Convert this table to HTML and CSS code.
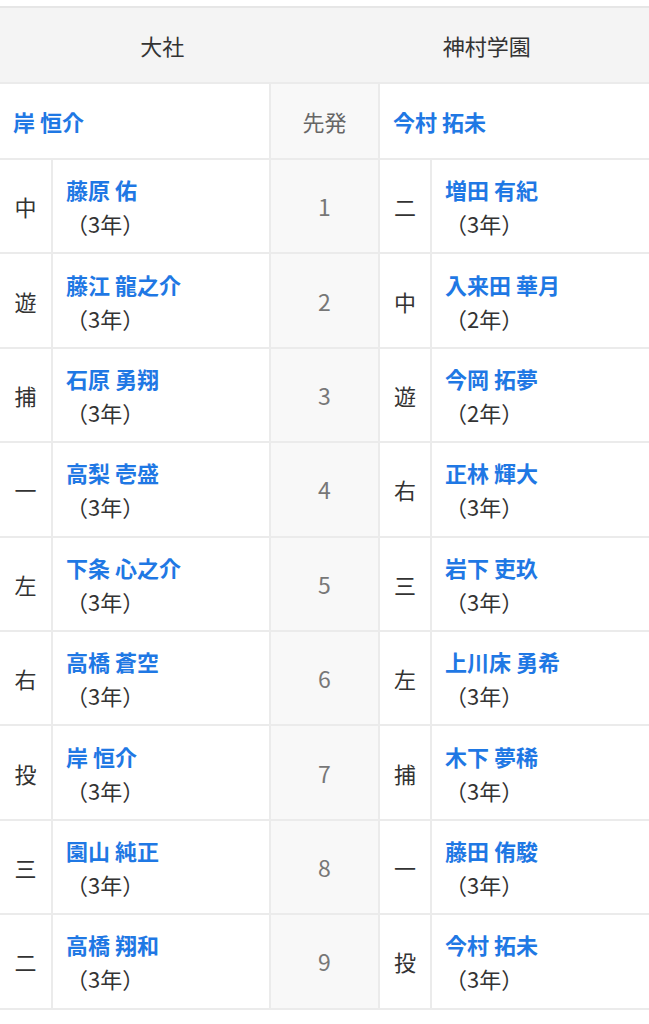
FILE: index.html
```html
<!DOCTYPE html>
<html lang="ja">
<head>
<meta charset="utf-8">
<title>スタメン</title>
<link rel="stylesheet" href="styles.css">
</head>
<body>
<div class="lineup">
  <div class="head">
    <div class="team">大社</div>
    <div class="team">神村学園</div>
  </div>
  <div class="pitcher left"><a class="name">岸 恒介</a></div>
  <div class="mid label">先発</div>
  <div class="pitcher right"><a class="name">今村 拓未</a></div>

  <div class="pos">中</div><div class="player"><a class="name">藤原 佑</a><span class="grade">（3年）</span></div><div class="mid num">1</div><div class="pos">二</div><div class="player"><a class="name">増田 有紀</a><span class="grade">（3年）</span></div>

  <div class="pos">遊</div><div class="player"><a class="name">藤江 龍之介</a><span class="grade">（3年）</span></div><div class="mid num">2</div><div class="pos">中</div><div class="player"><a class="name">入来田 華月</a><span class="grade">（2年）</span></div>

  <div class="pos">捕</div><div class="player"><a class="name">石原 勇翔</a><span class="grade">（3年）</span></div><div class="mid num">3</div><div class="pos">遊</div><div class="player"><a class="name">今岡 拓夢</a><span class="grade">（2年）</span></div>

  <div class="pos">一</div><div class="player"><a class="name">高梨 壱盛</a><span class="grade">（3年）</span></div><div class="mid num">4</div><div class="pos">右</div><div class="player"><a class="name">正林 輝大</a><span class="grade">（3年）</span></div>

  <div class="pos">左</div><div class="player"><a class="name">下条 心之介</a><span class="grade">（3年）</span></div><div class="mid num">5</div><div class="pos">三</div><div class="player"><a class="name">岩下 吏玖</a><span class="grade">（3年）</span></div>

  <div class="pos">右</div><div class="player"><a class="name">高橋 蒼空</a><span class="grade">（3年）</span></div><div class="mid num">6</div><div class="pos">左</div><div class="player"><a class="name">上川床 勇希</a><span class="grade">（3年）</span></div>

  <div class="pos">投</div><div class="player"><a class="name">岸 恒介</a><span class="grade">（3年）</span></div><div class="mid num">7</div><div class="pos">捕</div><div class="player"><a class="name">木下 夢稀</a><span class="grade">（3年）</span></div>

  <div class="pos">三</div><div class="player"><a class="name">園山 純正</a><span class="grade">（3年）</span></div><div class="mid num">8</div><div class="pos">一</div><div class="player"><a class="name">藤田 侑駿</a><span class="grade">（3年）</span></div>

  <div class="pos">二</div><div class="player"><a class="name">高橋 翔和</a><span class="grade">（3年）</span></div><div class="mid num">9</div><div class="pos">投</div><div class="player"><a class="name">今村 拓未</a><span class="grade">（3年）</span></div>
</div>
</body>
</html>
```

FILE: styles.css
```css
html, body {
  margin: 0;
  padding: 0;
  background: #ffffff;
}

body {
  padding-top: 6px;
  font-family: "Noto Sans CJK JP", "Noto Sans", sans-serif;
  font-size: 22px;
  color: #333333;
}

.lineup {
  display: grid;
  grid-template-columns: 51px 216px 107px 50px 1fr;
  grid-template-rows: 74px 74px repeat(9, 92.4px);
  gap: 2px;
  background: #ebebeb;
  border-top: 2px solid #e6e6e6;
  border-bottom: 2px solid #ebebeb;
}

.head {
  grid-column: 1 / -1;
  display: flex;
  background: #f4f4f4;
}

.team {
  flex: 1;
  display: flex;
  align-items: center;
  justify-content: center;
  color: #333333;
}

.pitcher {
  background: #ffffff;
  display: flex;
  align-items: center;
  padding-left: 13px;
}

.pitcher.left {
  grid-column: 1 / 3;
}

.pitcher.right {
  grid-column: 4 / 6;
}

.mid {
  background: #f8f8f8;
  display: flex;
  align-items: center;
  justify-content: center;
  color: #777777;
}

.label {
  color: #666666;
}

.num {
  color: #777777;
  font-size: 23px;
}

.pos {
  background: #ffffff;
  display: flex;
  align-items: center;
  justify-content: center;
  color: #333333;
}

.player {
  background: #ffffff;
  display: flex;
  flex-direction: column;
  justify-content: center;
  padding-left: 13px;
  line-height: 34px;
}

.name {
  color: #1f78e4;
  font-weight: 700;
  text-decoration: none;
}

.grade {
  color: #333333;
}
```
